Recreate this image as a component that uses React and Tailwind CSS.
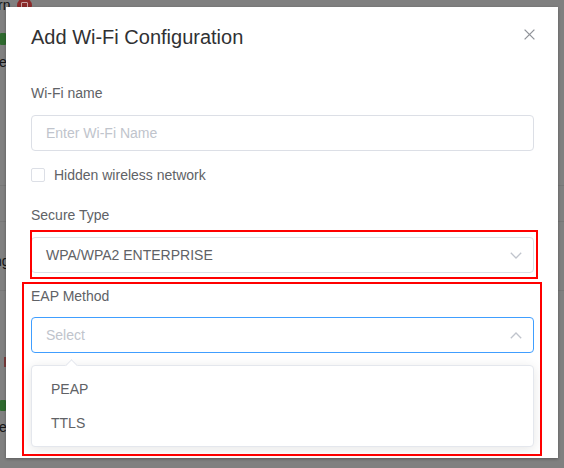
import React from "react";

const font = { fontFamily: '"Liberation Sans", Arial, sans-serif' };

function Chevron({ up }) {
  return (
    <svg width="12" height="7" viewBox="0 0 12 7" className="shrink-0">
      <polyline
        points={up ? "0.8,6.2 6,1 11.2,6.2" : "0.8,0.8 6,6 11.2,0.8"}
        fill="none"
        stroke="#c0c4cc"
        strokeWidth="1.3"
      />
    </svg>
  );
}

function Select({ value, placeholder, focused, up }) {
  return (
    <div
      className={
        "box-border h-[36px] w-full rounded-[4px] border flex items-center pl-[14px] pr-[11px] " +
        (focused ? "border-[#409eff]" : "border-[#dcdfe6]")
      }
    >
      <span className={"flex-1 text-[14px] " + (value ? "text-[#606266]" : "text-[#c0c4cc]")}>
        {value || placeholder}
      </span>
      <Chevron up={up} />
    </div>
  );
}

export default function App() {
  return (
    <div className="relative w-[564px] h-[468px] overflow-hidden bg-[#808080]" style={font}>
      {/* dimmed underlying page */}
      <div className="flex flex-col text-[14px] text-[#151515]">
        <div className="flex items-center h-[14px] mt-[-2px]">
          <span className="ml-[-2px] leading-[14px]">rn</span>
          <span className="ml-[7px] w-[15px] h-[15px] rounded-full bg-[#8c2a2a] flex items-center justify-center">
            <span className="w-[7px] h-[7px] border border-[#c9a0a0] rounded-[1px]" />
          </span>
        </div>
        <div className="mt-[21px] ml-[0px] w-[6px] h-[12px] bg-[#2f6a2f] rounded-[1px]" />
        <div className="mt-[10px] ml-[-1px] leading-[14px]">e</div>
        <div className="mt-[116px] h-px bg-[#777]" />
        <div className="mt-[35px] h-px bg-[#777]" />
        <div className="mt-[32px] ml-[-6px] leading-[14px]">ng</div>
        <div className="mt-[22px] h-px bg-[#777]" />
        <div className="mt-[66px] ml-[4px] w-[2px] h-[10px] bg-[#7a3b3b]" />
        <div className="mt-[33px] ml-[0px] w-[6px] h-[11px] bg-[#2f6a2f] rounded-[1px]" />
        <div className="mt-[9px] ml-[-1px] leading-[14px]">e</div>
      </div>

      {/* dialog */}
      <div className="absolute left-[6px] top-[7px] w-[552px] h-[451px] bg-white shadow-[0_1px_3px_rgba(0,0,0,0.3)] box-border pl-[25px] pr-[24px] pt-[18px]">
        <div className="flex items-start justify-between">
          <div className="text-[20px] leading-[24px] text-[#303133]">Add Wi-Fi Configuration</div>
          <svg width="11" height="11" viewBox="0 0 11 11" className="mt-[4px] mr-[-1px]">
            <path d="M0.6 0.6 L10.4 10.4 M10.4 0.6 L0.6 10.4" stroke="#909399" strokeWidth="1.3" />
          </svg>
        </div>

        <div className="mt-[34px] text-[14px] leading-[20px] text-[#606266]">Wi-Fi name</div>
        <div className="mt-[12px] box-border h-[36px] w-full rounded-[4px] border border-[#dcdfe6] flex items-center pl-[14px]">
          <span className="text-[14px] text-[#c0c4cc]">Enter Wi-Fi Name</span>
        </div>

        <div className="mt-[14px] h-[20px] flex items-center">
          <span className="box-border w-[14px] h-[14px] rounded-[2px] border border-[#dcdfe6] bg-white" />
          <span className="ml-[9px] text-[14px] text-[#606266]">Hidden wireless network</span>
        </div>

        <div className="mt-[20px] text-[14px] leading-[20px] text-[#606266]">Secure Type</div>
        <div className="mt-[12px]">
          <Select value="WPA/WPA2 ENTERPRISE" />
        </div>

        <div className="mt-[13px] text-[14px] leading-[20px] text-[#606266]">EAP Method</div>
        <div className="mt-[11px]">
          <Select placeholder="Select" focused up />
        </div>

        <div className="relative mt-[12px] box-border rounded-[4px] border border-[#e4e7ed] bg-white shadow-[0_2px_12px_rgba(0,0,0,0.1)] py-[6px]">
          <div className="absolute left-[35px] top-[-5px] w-[9px] h-[9px] rotate-45 bg-white border-l border-t border-[#e4e7ed]" />
          <div className="h-[34px] leading-[34px] pl-[19px] pr-[20px] text-[14px] text-[#606266]">PEAP</div>
          <div className="h-[34px] leading-[34px] pl-[19px] pr-[20px] text-[14px] text-[#606266]">TTLS</div>
        </div>
      </div>

      {/* annotation boxes */}
      <div className="absolute left-[30px] top-[230px] w-[508px] h-[49px] border-2 border-[#ff0000] pointer-events-none" />
      <div className="absolute left-[22px] top-[282px] w-[520px] h-[174px] border-2 border-[#ff0000] pointer-events-none" />
    </div>
  );
}
